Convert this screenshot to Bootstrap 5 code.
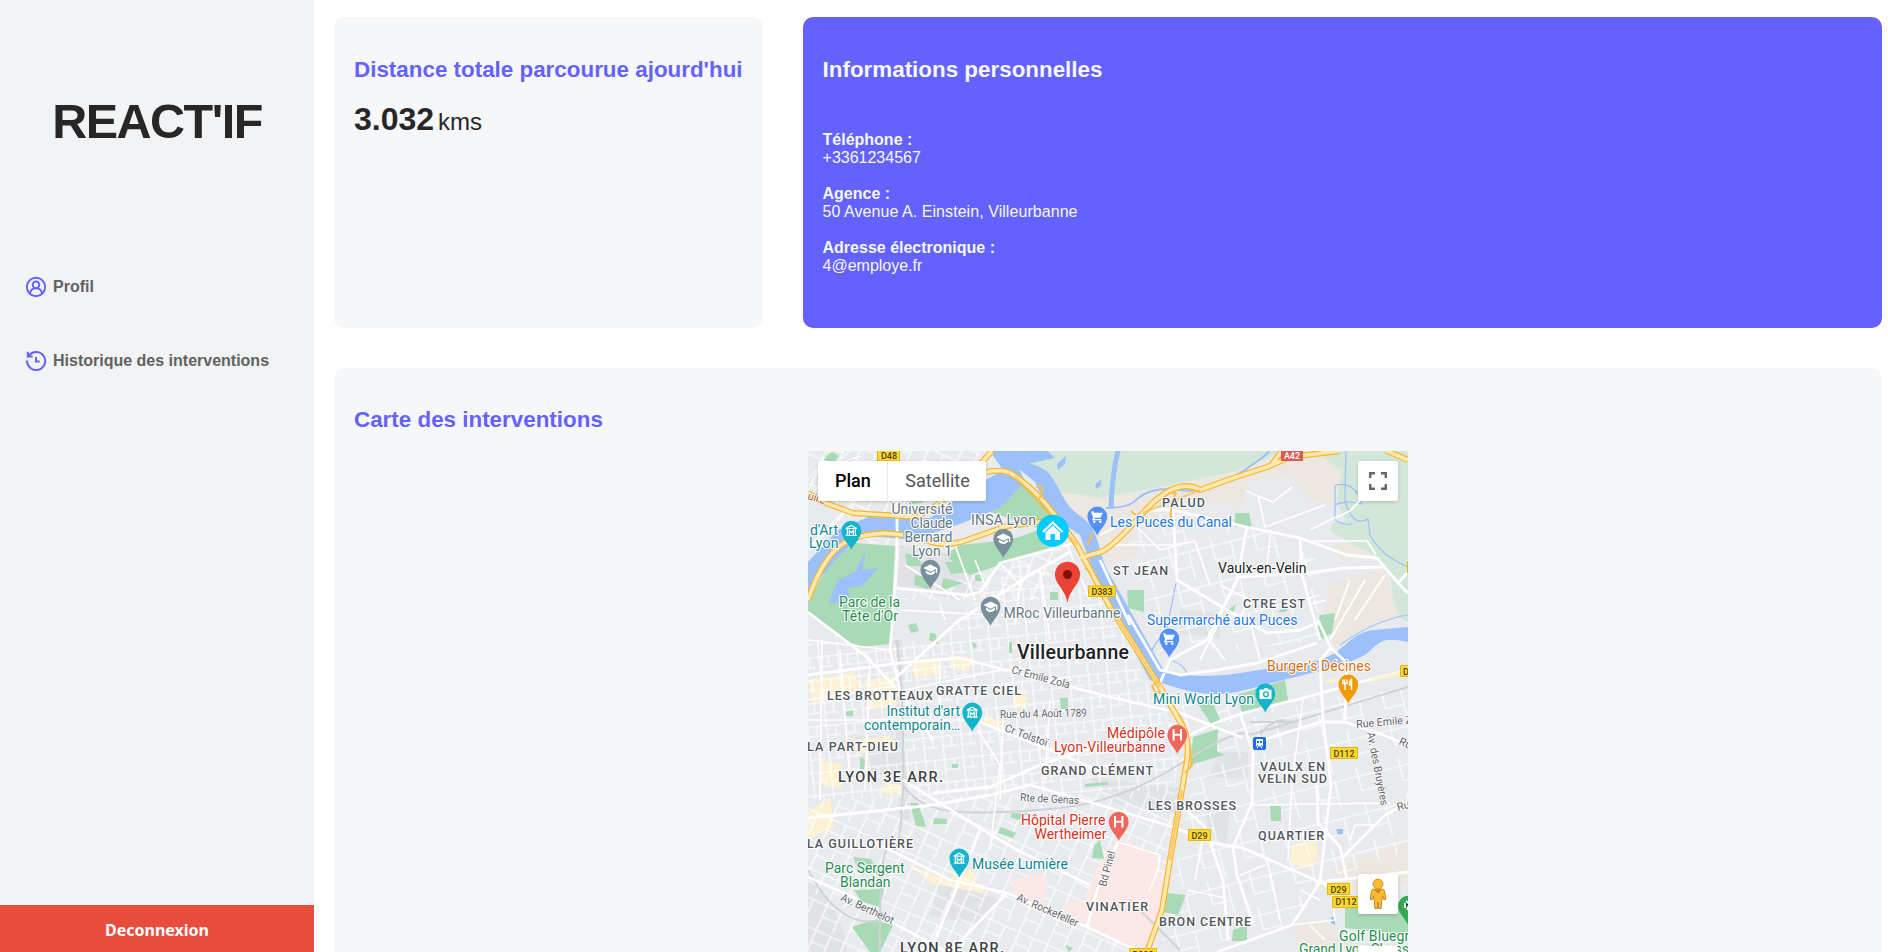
<!DOCTYPE html>
<html lang="fr">
<head>
<meta charset="utf-8">
<meta name="viewport" content="width=device-width, initial-scale=1">
<title>REACT'IF</title>
<link href="https://cdn.jsdelivr.net/npm/bootstrap@5.3.0/dist/css/bootstrap.min.css" rel="stylesheet">
<style>
body{font-family:"Liberation Sans",Arial,sans-serif;color:#272727;height:952px;overflow:hidden;line-height:18px}
.side{width:314px;background:#f1f3f5}
.brand{font-size:48.500px;letter-spacing:-1.500px;line-height:56px;margin-top:93px;margin-bottom:127px}
.menu a{color:#616161;font-weight:700;height:22px;margin-bottom:52px;padding-left:25px;gap:6px}
.logout{background:#e84c3d;height:47px;font:700 16px "Noto Sans",sans-serif;padding:3px 0 0}
.main{padding:17px 6px 0 20px;gap:40px}
.tile{border-radius:10px;background:#f6f7f9;padding:40px 20px 0}
.tile h2{font-size:22.4px;line-height:26px;color:#6462ff}
.tops{height:311px;gap:40px}
.km{margin-top:18px;line-height:37px;font-size:24px}
.km b{font-size:32px}
.info{background:#6462ff;color:#f6f7f9}
.info h2{color:#f6f7f9;margin-bottom:48px!important}
.info p{margin-bottom:18px}
.adresse{letter-spacing:.06px}
.carte{padding-top:39px;height:584px}
.plan{width:600px;height:501px;margin-top:18px;background:#e8eaed}
.ctl{background:#fff;box-shadow:0 1px 4px -1px rgba(0,0,0,.3);height:40px;border-radius:2px}
.sq{width:40px;right:10px}
.types{left:10px;top:10px;font:18px Roboto,sans-serif;color:#565656}
.types span{padding:0 16.500px 2px 17px}
.types span:first-child{color:#000;font-weight:500;border-right:1px solid #ebebeb}
.plan text{font-family:Roboto,sans-serif;font-size:14px;stroke:#fff;stroke-width:2.2px;stroke-linejoin:round;paint-order:stroke}
.plan .q{font-size:12.5px;font-weight:500;fill:#50555a}
.plan .r{font-size:11px;fill:#5f6368;stroke-width:1.500px}
.plan .sh{font-size:9px;font-weight:500;fill:#4d4200;stroke:none}
.minor path{fill:none;stroke:#fff}
</style>
</head>
<body class="d-flex bg-white">
<aside class="side vh-100 d-flex flex-column flex-shrink-0">
  <h1 class="brand fw-bold text-center flex-shrink-0">REACT'IF</h1>
  <nav class="menu d-flex flex-column flex-shrink-0">
    <a class="d-flex align-items-center text-decoration-none" href="#">
      <svg width="22" height="22" viewBox="0 0 24 24" fill="none" stroke="#6462ff" stroke-width="2.1"><circle cx="12" cy="12" r="10"/><circle cx="12" cy="9.6" r="3.6"/><path d="M5.3 19c.6-3.400 3.300-5.700 6.700-5.700s6.100 2.300 6.700 5.700"/></svg>
      <span>Profil</span></a>
    <a class="d-flex align-items-center text-decoration-none" href="#">
      <svg width="22" height="22" viewBox="0 0 24 24" fill="none" stroke="#6462ff" stroke-width="2.2"><path d="M2.200 11.500A9.900 9.900 0 1 0 4.600 5.500L3 7"/><path d="M3 1.800V7h5.400M12 7.500v5h4"/></svg>
      <span>Historique des interventions</span></a>
  </nav>
  <button class="logout border-0 text-white w-100 mt-auto flex-shrink-0">Deconnexion</button>
</aside>
<main class="main flex-grow-1 d-flex flex-column">
  <div class="tops d-flex flex-shrink-0">
    <section class="tile flex-shrink-0"><h2 class="fw-bold m-0 text-nowrap">Distance totale parcourue ajourd'hui</h2>
      <div class="km d-flex align-items-baseline gap-1"><b>3.032</b><span>kms</span></div></section>
    <section class="tile info flex-grow-1"><h2 class="fw-bold m-0">Informations personnelles</h2>
      <p><b>Téléphone :</b><br>+3361234567</p>
      <p><b>Agence :</b><br><span class="adresse">50 Avenue A. Einstein, Villeurbanne</span></p>
      <p><b>Adresse électronique :</b><br>4@employe.fr</p></section>
  </div>
  <section class="tile carte flex-shrink-0 rounded-bottom-0"><h2 class="fw-bold m-0">Carte des interventions</h2>
    <div class="plan position-relative mx-auto overflow-hidden">
<svg class="d-block" width="600" height="501" viewBox="808 451 600 501">
<defs>
<pattern id="g1" class="minor" width="19" height="23" patternUnits="userSpaceOnUse" patternTransform="rotate(-6)"><path d="M0 3H19M5 0V23M5 13H19M14 3V13" stroke-width="1.100"/></pattern>
<pattern id="g2" class="minor" width="31" height="27" patternUnits="userSpaceOnUse" patternTransform="rotate(24)"><path d="M0 5H31M8 0V27M8 17H24M24 5V27" stroke-width="1.200"/></pattern>
<pattern id="g3" class="minor" width="43" height="37" patternUnits="userSpaceOnUse" patternTransform="rotate(-14)"><path d="M0 9H43M12 0V24M12 24H31M31 9V37" stroke-width="1.100"/></pattern>
<path id="pin" d="M0 0C-1.500-5-9.900-11.500-9.900-19.300A9.900 9.900 0 0 1 9.900-19.300C9.900-11.500 1.500-5 0 0Z"/>
<g id="school"><use href="#pin" fill="#78909c"/><path fill="#fff" d="M0-24.500l-7 3.600L0-17.300l5.500-2.800v4H7v-4.800zM-4.500-18.400V-16Q0-12 4.500-16v-2.400L0-16z"/></g>
<g id="museum"><use href="#pin" fill="#12b5cb"/><path fill="none" stroke="#fff" stroke-width="1.200" d="M-5.500-21.500L0-24.500L5.500-21.500ZM-4-21v6M4-21v6M-5.500-14.500H5.500M-2-15v-4.500L0-17.300L2-19.500v4.500"/></g>
<g id="cart"><use href="#pin" fill="#5491f5"/><path fill="#fff" d="M-6-24.500h2.200l.7 1.500H5.500l-2.300 5H-2.500l-.8 1.300H4v1.200H-5.300l1.100-3-1.800-4.800z"/><circle cx="-3" cy="-14" r="1.200" fill="#fff"/><circle cx="3" cy="-14" r="1.200" fill="#fff"/></g>
<g id="hosp"><use href="#pin" fill="#ee675c"/><path stroke="#fff" stroke-width="2" d="M-3.700-25v11.500M3.700-25v11.500M-3.700-19.200H3.700"/></g>
</defs>
<!-- land use -->
<g fill="#d2e7da">
<path d="M1003 451H1282L1267 462 1233 472 1180 484 1140 491 1100 498 1060 492 1040 475 1010 465Z"/>
<path d="M1318 451H1408V622L1400 617 1393 600 1390 573 1377 557 1350 543 1331 531 1332 523 1346 521 1336 500 1340 475Z"/>
</g>
<g fill="#ece8e1">
<path d="M1060 492L1100 498 1140 491 1233 472 1282 452 1318 452 1342 472 1336 505 1310 500 1290 477 1248 480 1244 506 1180 502 1138 530 1105 575Z"/>
<path d="M1331 545L1350 543 1376 556 1340 560ZM1330 583L1385 570 1393 600 1400 617 1365 628 1335 648 1325 610ZM1330 870L1375 852 1408 842V885L1350 890ZM1293 926L1335 920 1340 952H1300Z"/>
<path d="M1113 546l24-5v14l-12 5h-15z"/>
</g>
<g fill="#e0e2e6">
<path d="M900 545l60 10 20 36-25 8-58-12zM855 735l50 5-5 40-35-5zM1090 778l90 10-5 25-60-10zM1180 610l40 3v25l-40-5zM1205 800l25 6-4 40-18-12zM1220 752h28v26h-40zM893 640l9 0 8 180h-11zM1276 720h24l-4 10h-26z"/>
<path d="M808 880q30 20 40 72h-40zM940 880l60 20-20 25-50-10z"/>
</g>
<g fill="#fcf2d3">
<path d="M808 680l45-8 10 16-50 16zM865 680l30-3 2 28-30 5zM912 662l28-5v18l-26 2zM948 655l26 3-6 14-18-4zM1013 690l12 0 2 18-14 0zM853 740l38-4 5 12-40 6zM820 760l22 4v25l-20-4zM808 812l22-15 4 30-26 12zM955 870h20v14h-24zM905 862l30 14 50 10-2 7-50-9zM1292 845l24-5 3 18-10 10-20-4zM985 715l20 8-4 8-18-6zM884 783l20 2-2 10-20-1z"/>
</g>
<g class="minor">
<path d="M808 640L895 645 940 635 1020 560 1110 600 1150 690 1180 740 1175 790 808 800Z" style="fill:url(#g1);stroke:none"/>
<path d="M808 800L1175 790 1165 905 1145 952H808Z" style="fill:url(#g2);stroke:none"/>
<path d="M1120 510L1240 520 1320 560 1320 640 1160 660ZM1160 700L1408 690V850L1320 882 1290 925 1220 952H1160L1190 790Z" style="fill:url(#g3);stroke:none"/>
<path d="M808 451H900L905 545H896V640 600L1065 545 1040 600 900 600ZM808 451H990L940 500 850 510 808 490Z" style="fill:url(#g2);stroke:none"/>
</g>
<g fill="#fce8e6"><path d="M1012 880L1040 875 1047 877 1043 905 1012 893ZM1063 903L1085 902 1098 865 1090 878 1118 838 1157 855 1156 868 1166 870 1160 905 1145 947 1130 945 1088 926 1066 915Z"/></g>
<g fill="#a8dab5">
<path d="M895 546L855 543 832 560 808 600V613L845 640 862 647 890 644Z"/>
<path d="M990 512L1025 482 1055 513 1044 528 1010 540 960 545 945 555 970 575 1056 546 1044 530Z"/>
<path d="M905 553l12 3 6 10-16 0zM945 562h18l6 10-18 2zM915 575l18 2-5 12-14-4zM943 578l20 5-22 8zM975 575h8v6h-8zM1050 592h8v8h-8zM1235 513h14l3 14h-17zM1127 590h17v22l-16-4zM1320 615l15-2-3 20-10 6-5-12zM1236 695L1285 680 1288 700 1242 712zM1197 703l14-4 10 23-8 5zM1193 737l25-8-1 22 7 4-34 10zM853 857l18 2 8 15-20-2zM854 890l30-1-4 18-18-5zM852 927L873 920 893 925 880 952H870zM910 803l8 0 8 24-10-1zM934 818l13 1v5l-14 0zM1012 813h18l-12 7-8-3zM1001 827l15 6-3 5-15-5zM1100 840l4 19-12-1 2-12zM1270 806h11v15h-10zM1166 893l20 2-8 20-14-3zM1233 930l14-5v16h-15zM1345 905H1408V935L1345 928ZM908 625l8-2 3 8-8 2zM930 633l5 0 4 12-10-5zM972 642l5 3-3 5zM1009 642h3v11h-3zM1060 698h8v11h-7zM844 712l9-2v6l-9 0zM860 757l5 3-1 9-4 0zM952 764h6v4h-6zM1085 784l23-2v3l-23 2zM1065 945l8 3-4 4zM1228 610l8-6-3 10zM1280 610l8-2-2 4-8 0z"/>
<path d="M825 455l8-3 6 4-5 6-10-2zM826 526l8-2 2 4-8 1zM905 495l20 0-3 8-10 1z"/>
</g>
<!-- water -->
<g fill="#9cc0f9">
<path d="M990 451H1048L1055 458 1018 466 1025 482 1000 508 960 524 912 540 862 535 840 555 808 592V562L838 530 868 517 930 518 968 490 1003 470Z"/>
<path d="M828 604L838 580 855 572 866 550 862 570 878 568 862 586 848 588 850 600ZM1057 464l9-8-1 8-7 6zM1095 485l6-6v7l-5 3z"/>
<path d="M1008 460Q1035 462 1048 472C1062 490 1062 503 1080 516C1102 530 1096 552 1110 575L1164 671Q1200 680 1240 673L1315 661C1345 655 1345 635 1373 630L1408 627V642C1380 636 1380 643 1365 655C1340 668 1300 675 1245 690Q1210 700 1168 685L1150 680 1098 585 1080 535 1050 515 1035 482Z"/>
<path d="M1336 829h7v5l-5 1zM1331 917h4v8l-4-2z"/>
</g>
<g fill="none" stroke="#9cc0f9"><path stroke-width="5" d="M1118 451Q1112 475 1111 508"/><path stroke-width="2" d="M1106 508Q1130 508 1137 499 1152 486 1180 490T1240 473 1268 451"/><path stroke-width="1.200" d="M1176 583L1166 633Q1145 650 1152 668M1170 660Q1188 665 1188 680M1346 451Q1345 485 1345 500 1352 528 1368 519L1370 535Q1380 555 1408 567M1336 485Q1355 481 1362 504 1345 500 1335 505M1335 485V520Q1345 526 1352 524M1340 645Q1375 620 1408 615"/></g>
<path fill="none" stroke="#cfd3d8" stroke-width="2" d="M897 640Q905 710 903 785T890 850 880 952M808 870Q840 930 880 920M903 785Q920 810 960 812T1060 808 1180 764 1250 735L1408 687M1180 950L1130 900M1250 722h45M1260 735q10-15 25-15"/>
<!-- streets -->
<g fill="none" stroke="#fff" stroke-linejoin="round">
<path stroke-width="2.800" d="M895 588L967 595 980 592 1000 563 1067 545 1078 542M897 500V560L890 650 900 690M808 612L867 657 900 693 933 740M808 675L900 663 960 658 1013 672 1110 697 1180 713 1243 738M890 683L957 622 1033 573 1070 552M933 793L990 787 1040 765 1100 745 1155 730 1190 735 1210 725 1240 714 1307 697 1360 682 1408 670M975 720L1050 750 1110 775M1263 740L1320 722 1345 722 1375 732 1408 745M1240 713L1253 753 1252 803 1233 847 1237 875 1253 923M1318 620L1331 648 1320 660 1323 720 1331 785 1320 882M1331 648L1347 663 1345 720M1317 785L1318 823 1340 847 1347 880M1100 805L1173 827 1213 843 1243 848 1320 882 1342 892M1320 882L1408 872M1320 882L1292 925 1217 952M1408 803L1385 815 1343 857M1227 523L1300 538 1347 555 1377 558 1398 583 1408 593M1237 577L1307 573 1345 568 1383 567M1300 538L1302 575 1320 640M1247 527L1237 580 1207 640 1170 660 1160 683M1143 510L1173 510 1247 527M1173 510L1177 580 1227 610 1267 633 1300 630 1320 622M1128 615L1160 670 1180 675 1217 670 1257 663 1317 643M1100 560L1130 625M808 877L853 897 893 923 947 952M870 840L950 880 1007 893 1087 927 1140 952M1007 893L950 952M980 830L960 880 930 952M903 780L983 830 1017 850 1090 885M1087 927L1100 880 1118 842M808 818L933 805 990 795 1030 785 1100 805M1175 800L1205 827 1223 880 1228 940M1398 583L1408 572"/>
<path stroke-width="1.700" d="M1267 857L1280 920M1250 805L1390 803M1271 530L1266 575M1246 491L1273 502 1292 487M1258 495L1265 527 1325 505M1310 530L1330 520 1350 511 1368 492M1311 541H1367L1376 555M1303 700L1292 780 1288 860M1113 545L1173 545 1196 541M1135 525L1160 550 1195 541 1210 585M1100 535L1150 510M1308 605L1326 600M1350 580L1335 620M1365 580L1330 640M1385 575L1355 620M1220 585L1250 600 1237 622M1000 563L1020 585 1015 625M1067 545L1090 600M1040 570L1050 640M940 605L945 620M975 560L987 590M955 545L975 600M900 610L990 615M905 565L960 600M808 720L970 720M808 700L900 685M940 660V720M905 690L1000 670M978 730L1000 765 990 850M1003 720L1000 800M1050 700L1045 780M870 660L865 790M840 650L850 780M822 640L820 800M808 640L890 650M1118 842L1160 855 1158 870 1165 872M1158 870L1149 892M1205 827L1195 880M1187 890L1225 898M1240 875L1265 865M1350 840L1355 825 1375 825M1260 660L1250 620M1200 660L1220 620M1225 660L1210 640M1320 900L1300 890M1330 880L1335 920 1292 925M1310 925L1325 940"/>
<path stroke-width="3" d="M808 550L875 480"/><path stroke="#e8eaed" stroke-width="1" d="M808 550L875 480"/><path d="M808 498L835 465 850 451M808 480L830 451M855 460L880 475M842 462l18-6 10 10"/>
</g>
<!-- motorways -->
<g fill="none" stroke-linejoin="round">
<path stroke="#fbb32e" stroke-width="6" d="M808 493L823 502 853 513 917 517 937 505 960 487 975 470 992 451M808 600Q825 550 850 540T903 535M925 540Q945 548 967 540L1007 526 1047 521M987 472Q1005 468 1015 476C1042 495 1055 515 1077 545L1110 607 1160 687 1182 725Q1190 738 1187 760L1182 790 1170 860 1162 910 1147 952M1080 558L1100 552Q1110 550 1143 513T1200 490L1233 478 1267 467 1290 457 1340 451M1272 464L1282 451M1387 451L1408 460"/>
<path stroke="#ffe9ae" stroke-width="3.600" d="M808 493L823 502 853 513 917 517 937 505 960 487 975 470 992 451M808 600Q825 550 850 540T903 535M925 540Q945 548 967 540L1007 526 1047 521M987 472Q1005 468 1015 476C1042 495 1055 515 1077 545L1110 607 1160 687 1182 725Q1190 738 1187 760L1182 790 1170 860 1162 910 1147 952M1080 558L1100 552Q1110 550 1143 513T1200 490L1233 478 1267 467 1290 457 1340 451M1272 464L1282 451M1387 451L1408 460"/>
<path stroke="#fbb32e" stroke-width="2.200" d="M1110 607L1160 687M1015 476L1077 545M1182 790L1170 860M1143 513L1200 490" opacity=".55"/>
<path stroke="#fbc04a" stroke-width="2" d="M1036 487a4 4 0 0 1 6 5l-4 10M1168 493h8l-5 10v17M1160 680l-8 6 3 6 10 2M1178 713l7 12M1190 745l2 20-7 8M1087 545l6-12M1085 568l6 5M1131 511l5 4"/>
</g>
<path d="M1325 682L1347 678M1372 680L1400 673" stroke="#fef1cc" stroke-width="3"/>
<!-- road shields -->
<g fill="#fdd835" stroke="#e5b800"><path d="M877.500 449h22v12h-22zM1088.500 586h27v10.500h-27zM1330.500 747.500h27v11h-27zM1400.500 665.500h14v11h-14zM1188.500 829.500h22v11h-22zM1327.500 883.500h22v11h-22zM1332.500 896.500h27v11h-27zM1129.500 948.500h27v11h-27zM1407.500 562h5v11h-5z"/></g>
<path fill="#d85a5a" d="M1281 449h22v12h-22z"/>
<g text-anchor="middle">
<text class="sh" x="889" y="459">D48</text><text class="sh" x="1102" y="594.500">D383</text><text class="sh" x="1344" y="756.500">D112</text><text class="sh" x="1406" y="674.500">D</text><text class="sh" x="1199.500" y="838.500">D29</text><text class="sh" x="1338.500" y="892.500">D29</text><text class="sh" x="1346" y="905">D112</text><text class="sh" x="1143" y="957.500">D383</text><text class="sh" x="1292" y="458.500" style="fill:#fff">A42</text></g>
<!-- place names -->
<g fill="#5f7681">
<text x="891.500" y="514.300" textLength="61">Université</text><text x="910.500" y="528.300" textLength="42">Claude</text><text x="904.500" y="542.300" textLength="48">Bernard</text><text x="912" y="556.300" textLength="40">Lyon 1</text><text x="971" y="525.300" textLength="65">INSA Lyon</text><text x="1003.500" y="617.500" textLength="117">MRoc Villeurbanne</text></g>
<g fill="#0b8793">
<text x="810" y="534.500" textLength="28">d'Art</text><text x="809" y="548.300" textLength="29.500">Lyon</text><text x="886.500" y="716" textLength="73.500">Institut d'art</text><text x="864" y="730.300" textLength="96">contemporain…</text><text x="972" y="869" textLength="96">Musée Lumière</text><text x="1153" y="704" textLength="101">Mini World Lyon</text></g>
<g fill="#1e8e4e">
<text x="839" y="607.300" textLength="61">Parc de la</text><text x="842" y="621" textLength="56">Tête d'Or</text><text x="825" y="873" textLength="79.500">Parc Sergent</text><text x="840" y="887" textLength="50.500">Blandan</text><text x="1339" y="940.500" textLength="93">Golf Bluegreen</text><text x="1299" y="954" textLength="128">Grand Lyon Chassieu</text></g>
<g fill="#2376e5"><text x="1110" y="527.300" textLength="122">Les Puces du Canal</text><text x="1147" y="625.300" textLength="150.500">Supermarché aux Puces</text></g>
<g fill="#d93025"><text x="1107" y="738" textLength="58">Médipôle</text><text x="1054" y="752" textLength="111.500">Lyon-Villeurbanne</text><text x="1021" y="825" textLength="84.500">Hôpital Pierre</text><text x="1034.500" y="839" textLength="72">Wertheimer</text></g>
<text x="1267" y="671" textLength="104" fill="#d56e0c">Burger's Décines</text>
<text x="1218" y="573" textLength="88.500" fill="#202124">Vaulx-en-Velin</text>
<text x="1017" y="658.700" textLength="112" fill="#202124" style="font-size:19.500px;font-weight:500">Villeurbanne</text>
<g>
<text class="q" x="1162" y="506.500" textLength="43">PALUD</text><text class="q" x="1113" y="574.500" textLength="55">ST JEAN</text><text class="q" x="1243" y="607.500" textLength="62">CTRE EST</text><text class="q" x="936" y="694.500" textLength="85">GRATTE CIEL</text><text class="q" x="827" y="699.500" textLength="106">LES BROTTEAUX</text><text class="q" x="807" y="750.500" textLength="91">LA PART-DIEU</text><text class="q" x="1041" y="774.500" textLength="112">GRAND CLÉMENT</text><text class="q" x="1260" y="770.500" textLength="65">VAULX EN</text><text class="q" x="1258" y="782.500" textLength="69">VELIN SUD</text><text class="q" x="1148" y="809.500" textLength="88">LES BROSSES</text><text class="q" x="1258" y="839.500" textLength="66">QUARTIER</text><text class="q" x="807" y="847.500" textLength="106">LA GUILLOTIÈRE</text><text class="q" x="1086" y="910.500" textLength="62">VINATIER</text><text class="q" x="1159" y="925.500" textLength="92">BRON CENTRE</text>
<text class="q" x="838" y="781.500" textLength="105" style="font-size:14.500px;fill:#3c4043">LYON 3E ARR.</text><text class="q" x="900" y="953" textLength="104" style="font-size:14.500px;fill:#3c4043">LYON 8E ARR.</text></g>
<g>
<text class="r" transform="translate(1011 673) rotate(15)" textLength="60" lengthAdjust="spacingAndGlyphs">Cr Emile Zola</text><text class="r" transform="translate(1000 718) rotate(-1)" textLength="87" lengthAdjust="spacingAndGlyphs">Rue du 4 Août 1789</text><text class="r" transform="translate(1004 731) rotate(20)" textLength="45" lengthAdjust="spacingAndGlyphs">Cr Tolstoï</text><text class="r" transform="translate(1020 801) rotate(3)" textLength="59" lengthAdjust="spacingAndGlyphs">Rte de Genas</text><text class="r" transform="translate(1356.500 728) rotate(-5)" textLength="70" lengthAdjust="spacingAndGlyphs">Rue Emile Zola</text><text class="r" transform="translate(1367 733) rotate(79)" textLength="74" lengthAdjust="spacingAndGlyphs">Av. des Bruyères</text><text class="r" transform="translate(1398 744) rotate(25)">Rue</text><text class="r" transform="translate(1398 811) rotate(-15)">Rue</text><text class="r" transform="translate(840 900) rotate(25)" textLength="57" lengthAdjust="spacingAndGlyphs">Av. Berthelot</text><text class="r" transform="translate(1016 900) rotate(24)" textLength="66" lengthAdjust="spacingAndGlyphs">Av. Rockefeller</text><text class="r" transform="translate(1106 887) rotate(-75)" textLength="36" lengthAdjust="spacingAndGlyphs">Bd Pinel</text><text class="r" transform="translate(807 499) rotate(17)" style="fill:#955c2b">uire</text></g>
<!-- markers -->
<use href="#museum" x="851.300" y="550"/><use href="#museum" x="972.300" y="731.700"/><use href="#museum" x="959.300" y="877.700"/>
<use href="#school" x="930.300" y="589"/><use href="#school" x="1003.300" y="558"/><use href="#school" x="990.500" y="626"/>
<use href="#cart" x="1097.300" y="535.700"/><use href="#cart" x="1169.300" y="657.700"/>
<use href="#hosp" x="1177.300" y="754"/><use href="#hosp" x="1118.700" y="841"/>
<use href="#pin" x="1265.300" y="712.700" fill="#12b5cb"/><rect x="1259.500" y="689.500" width="12" height="9.500" rx="1" fill="#fff"/><path d="M1263.500 689.500l1-1.500h3l1 1.500" fill="#fff"/><circle cx="1266" cy="694.300" r="2.400" fill="#fff" stroke="#12b5cb" stroke-width="1.400"/>
<use href="#pin" x="1348.300" y="703.700" fill="#f29900"/><path d="M1344.500 679.500v4.500M1345 684v6M1342.800 679.500v4h4.200v-4M1351.500 690v-10.500q-2 1-2 5.500h2" fill="none" stroke="#fff" stroke-width="1.500"/>
<use href="#pin" x="1408" y="925" fill="#34a853"/><path d="M1406 901l3 3-2 6M1405 903v5" stroke="#fff" stroke-width="1.800"/>
<rect x="1253" y="737" width="13" height="13" rx="2" fill="#1a6fe8"/><path d="M1256.500 739.500h6v6.500h-6zM1257 748.500l1-2M1262 748.500l-1-2" fill="#fff" stroke="#fff"/><path d="M1257 741h2v2h-2zM1260 741h2v2h-2zM1257 745h1v1h-1zM1261 745h1v1h-1z" fill="#1a6fe8"/>
<circle cx="1052.800" cy="530.800" r="16" fill="#00ccff"/><path d="M1043 532l9.800-9.500 9.800 9.500" fill="none" stroke="#fff" stroke-width="2.200"/><path d="M1045.500 532.500l7.300-7 7.300 7V540h-5v-6h-4.600v6h-5z" fill="#fff"/>
<path fill="#ea4335" d="M1067.500 603C1065 588 1055 585 1055 574.200A12.500 12.500 0 0 1 1080 574.200C1080 585 1070 588 1067.500 603Z"/><circle cx="1067.500" cy="574.500" r="4.500" fill="#7f1010"/>
</svg>
      <div class="ctl types position-absolute d-flex"><span class="d-flex align-items-center">Plan</span><span class="d-flex align-items-center">Satellite</span></div>
      <div class="ctl sq position-absolute d-flex align-items-center justify-content-center" style="top:10px"><svg width="18" height="18" fill="none" stroke="#666" stroke-width="2.400"><path d="M1.200 6V1.200H6M12 1.200h4.800V6M16.800 12v4.800H12M6 16.800H1.200V12"/></svg></div>
      <div class="ctl sq position-absolute d-flex align-items-center justify-content-center" style="top:423px"><svg width="18" height="32" viewBox="0 0 18 32"><path fill="#fbbc2c" stroke="#a9752a" stroke-width=".8" d="M5 11h8q2 0 2.500 2L17 21l-2 1-1.500-4-.8 5-.6 7.500H9.600L9 24l-.6 6.500H5.900L5.300 23l-.8-5L3 22l-2-1L2.500 13q.5-2 2.500-2z"/><path fill="#e07a28" d="M5.500 11.500h7L9 16z"/><circle cx="9" cy="6" r="5" fill="#fbbc2c" stroke="#c58a20" stroke-width=".8"/></svg></div>
      <div class="ctl sq position-absolute" style="top:495px"></div>
    </div>
  </section>
</main>
<script src="https://cdn.jsdelivr.net/npm/bootstrap@5.3.0/dist/js/bootstrap.bundle.min.js"></script>
</body>
</html>
